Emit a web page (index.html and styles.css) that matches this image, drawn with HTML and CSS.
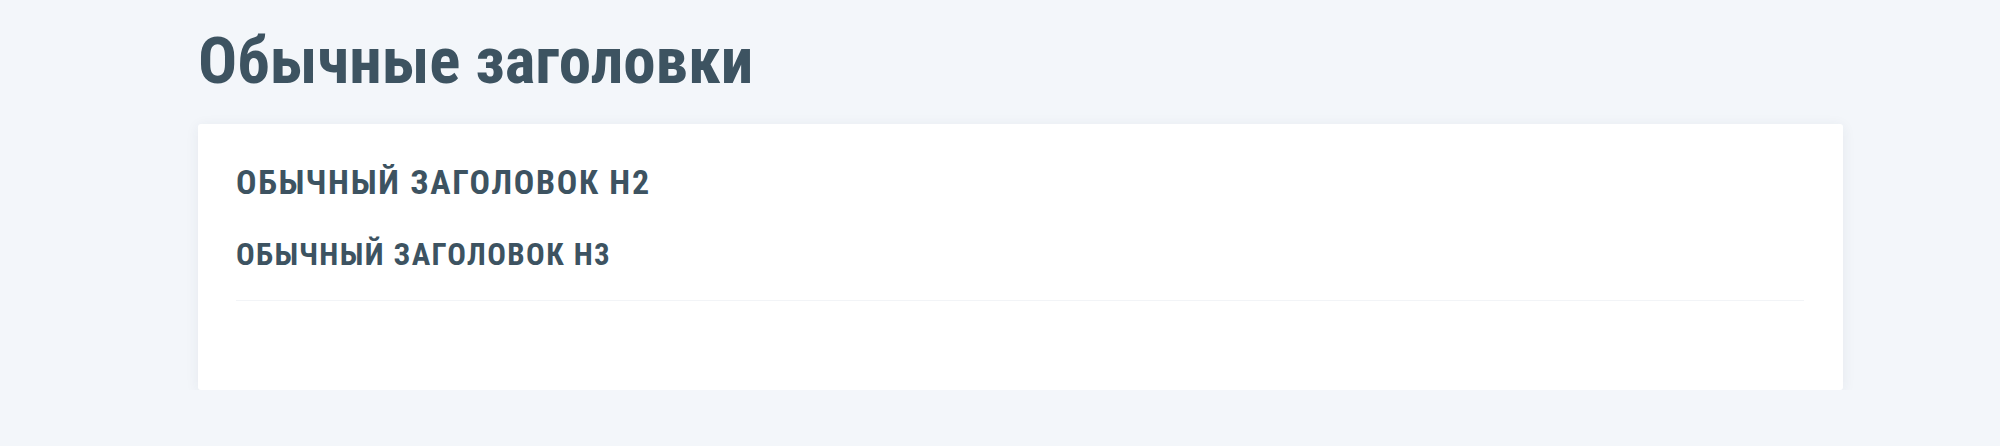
FILE: index.html
```html
<!DOCTYPE html>
<html lang="ru">
<head>
<meta charset="utf-8">
<title>Обычные заголовки</title>
<link rel="stylesheet" href="styles.css">
</head>
<body>
<main class="page">
  <h1 class="page-title">Обычные заголовки</h1>
  <section class="card">
    <h2 class="heading heading-h2">Обычный заголовок Н2</h2>
    <h3 class="heading heading-h3">Обычный заголовок Н3</h3>
    <hr class="divider">
  </section>
</main>
</body>
</html>
```
FILE: styles.css
```css
html, body {
  margin: 0;
  padding: 0;
  background: #f3f6fa;
}

body {
  font-family: Roboto, "Liberation Sans", sans-serif;
  font-stretch: condensed;
  color: #3d5361;
}

.page {
  padding: 23px 157px 0 198px;
}

.page-title {
  margin: 0 0 25px;
  font-size: 65px;
  line-height: 76px;
  font-weight: 700;
  font-stretch: condensed;
  letter-spacing: 0;
}

.card {
  background: #ffffff;
  border-radius: 3px;
  box-shadow: 0 2px 14px rgba(40, 60, 90, 0.07);
  padding: 38px 39px 89px 38px;
}

.heading {
  margin: 0;
  font-weight: 700;
  font-stretch: condensed;
  text-transform: uppercase;
}

.heading-h2 {
  font-size: 34px;
  line-height: 40px;
  letter-spacing: 0.05em;
  margin-bottom: 35px;
}

.heading-h3 {
  font-size: 31px;
  line-height: 36px;
  letter-spacing: 0.045em;
  margin-bottom: 27px;
}

.divider {
  margin: 0;
  border: 0;
  height: 1px;
  background: #f2f4f7;
}
```
